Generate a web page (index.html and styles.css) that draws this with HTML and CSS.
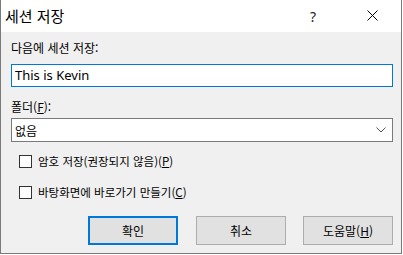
FILE: index.html
```html
<!DOCTYPE html>
<html lang="ko">
<head>
    <meta charset="UTF-8">
    <title>세션 저장</title>
    <link rel="stylesheet" href="styles.css">
</head>
<body>
    <div class="window">
        <div class="titlebar">
            <span class="title">세션 저장</span>
            <span class="help">?</span>
            <svg class="close" width="11" height="11" viewBox="0 0 11 11">
                <path d="M0.5 0.5 L10.5 10.5 M10.5 0.5 L0.5 10.5" stroke="#000" stroke-width="1" fill="none"/>
            </svg>
        </div>

        <div class="content">
            <label class="label first" for="name">다음에 세션 저장:</label>
            <div class="textbox" id="name">This is Kevin</div>

            <label class="label second">폴더(<u>F</u>):</label>
            <div class="combo">
                <span>없음</span>
                <svg width="10" height="6" viewBox="0 0 10 6">
                    <path d="M0.5 0.5 L5 5 L9.5 0.5" stroke="#555" stroke-width="1" fill="none"/>
                </svg>
            </div>

            <div class="check one">
                <span class="box"></span>
                <span>암호 저장(권장되지 않음)(<u>P</u>)</span>
            </div>
            <div class="check two">
                <span class="box"></span>
                <span>바탕화면에 바로가기 만들기(<u>C</u>)</span>
            </div>

            <div class="buttons">
                <button class="btn default">확인</button>
                <button class="btn">취소</button>
                <button class="btn">도움말(<u>H</u>)</button>
            </div>
        </div>
    </div>
</body>
</html>
```

FILE: styles.css
```css
body {
    margin: 0;
    padding: 0;
    background-color: #fff;
    font-family: "Noto Sans", "Noto Sans CJK KR", sans-serif;
    font-size: 12px;
    color: #000;
}

.window {
    width: 402px;
    height: 254px;
    box-sizing: border-box;
    border: 1px solid #7a7a7a;
    border-top: none;
    background-color: #f0f0f0;
}

.titlebar {
    height: 32px;
    background-color: #fff;
    display: flex;
    align-items: center;
    padding-left: 4px;
}

.title {
    font-family: "Noto Sans CJK KR", sans-serif;
    font-size: 15px;
    flex: 1;
    margin-top: -1px;
}

.help {
    font-size: 14px;
    width: 10px;
    margin-right: 47px;
    color: #222;
}

.close {
    margin-right: 23px;
    margin-top: -1px;
}

.content {
    padding: 8px 8px 0 10px;
}

.label {
    display: block;
    line-height: 16px;
    font-family: "Noto Sans CJK KR", sans-serif;
    font-size: 12px;
}

.label.first {
    margin-bottom: 8px;
}

.label.second {
    margin-top: 12px;
    margin-bottom: 3px;
}

.textbox {
    height: 23px;
    box-sizing: border-box;
    border: 1px solid #0078d7;
    background-color: #fff;
    padding-left: 3px;
    line-height: 21px;
    font-size: 13px;
}

.combo {
    height: 24px;
    box-sizing: border-box;
    border: 1px solid #7a7a7a;
    background-color: #fff;
    display: flex;
    align-items: center;
    justify-content: space-between;
    padding: 0 6px 0 3px;
    font-family: "Noto Sans CJK KR", sans-serif;
    font-size: 12px;
}

.check {
    display: flex;
    align-items: center;
    height: 16px;
    padding-left: 8px;
    font-family: "Noto Sans CJK KR", sans-serif;
    font-size: 11.5px;
}

.check.one {
    margin-top: 11px;
}

.check.two {
    margin-top: 15px;
}

.box {
    width: 13px;
    height: 13px;
    box-sizing: border-box;
    border: 1px solid #333;
    background-color: #fff;
    margin-right: 6px;
}

.buttons {
    display: flex;
    justify-content: flex-end;
    gap: 17px;
    margin-top: 16px;
}

.btn {
    width: 90px;
    height: 29px;
    box-sizing: border-box;
    border: 1px solid #adadad;
    background-color: #e1e1e1;
    font-family: "Noto Sans CJK KR", sans-serif;
    font-size: 12px;
    padding: 0;
    color: #000;
}

.btn.default {
    border: 2px solid #0078d7;
    margin-right: 1px;
}
```
